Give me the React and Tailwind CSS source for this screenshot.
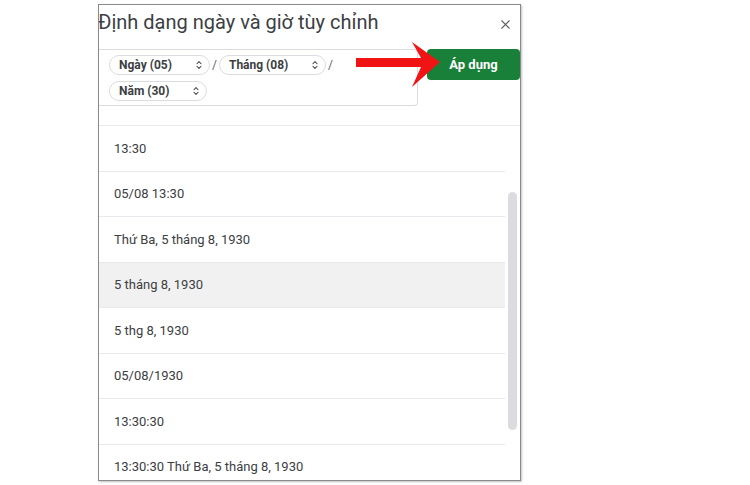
import { X, ChevronsUpDown } from "lucide-react";

const formats = [
  "13:30",
  "05/08 13:30",
  "Thứ Ba, 5 tháng 8, 1930",
  "5 tháng 8, 1930",
  "5 thg 8, 1930",
  "05/08/1930",
  "13:30:30",
  "13:30:30 Thứ Ba, 5 tháng 8, 1930",
];

const Chip = ({ label, width }) => (
  <div className={`${width} h-[20px] rounded-full border border-[#dadce0] flex items-center justify-between pl-[9px] pr-[5px]`}>
    <span className="text-[12px] font-bold text-[#3c4043] leading-none">{label}</span>
    <ChevronsUpDown size={10} strokeWidth={2.5} className="text-[#3c4043]" />
  </div>
);

const Slash = () => <span className="text-[12px] text-[#5f6368] px-[2px] leading-none">/</span>;

export default function App() {
  return (
    <div className="w-[750px] h-[485px] bg-white relative overflow-hidden" style={{ fontFamily: "Roboto, 'Liberation Sans', sans-serif" }}>
      <div className="ml-[98px] mt-[4px] w-[423px] h-[477px] border border-[#8a8a8a] shadow-[1px_1px_2px_rgba(0,0,0,0.25)] flex flex-col overflow-hidden bg-white">

        {/* Title */}
        <div className="h-[44px] flex items-start justify-between shrink-0">
          <h1 className="mt-[3px] text-[20px] leading-[28px] text-[#3c4043] -ml-[1px]">Định dạng ngày và giờ tùy chỉnh</h1>
          <X size={15} strokeWidth={1.8} className="mt-[12px] mr-[7px] text-[#5f6368]" />
        </div>

        {/* Format builder + apply */}
        <div className="flex items-start shrink-0 pb-[19px] border-b border-[#e8eaed]">
          <div className="w-[319px] h-[57px] border border-l-0 border-[#dadce0] rounded-r-[4px] pl-[10px] pt-[5px] flex flex-col gap-[6px]">
            <div className="flex items-center">
              <Chip label="Ngày (05)" width="w-[101px]" />
              <Slash />
              <Chip label="Tháng (08)" width="w-[107px]" />
              <Slash />
            </div>
            <div className="flex items-center">
              <Chip label="Năm (30)" width="w-[98px]" />
            </div>
          </div>
          <button className="ml-[9px] w-[93px] h-[31px] rounded-[4px] bg-[#188038] text-white text-[13px] font-bold flex items-center justify-center">
            Áp dụng
          </button>
        </div>

        {/* Format list */}
        <div className="flex flex-1 min-h-0">
          <ul className="w-[406px] shrink-0">
            {formats.map((f, i) => (
              <li
                key={f}
                className={`h-[45.5px] flex items-center pl-[15px] border-b border-[#e8eaed] text-[13px] text-[#3c4043] ${i === 3 ? "bg-[#f1f1f1]" : ""}`}
              >
                {f}
              </li>
            ))}
          </ul>
          <div className="flex-1 pl-[3px] pt-[66px]">
            <div className="w-[9px] h-[238px] rounded-full bg-[#dadce0]" />
          </div>
        </div>
      </div>

      {/* Red annotation arrow */}
      <svg className="absolute left-0 top-0" width="750" height="485" viewBox="0 0 750 485">
        <polygon points="356,58 421,58 412,42 440,62 412,87 421,67 356,67" fill="#f01414" />
      </svg>
    </div>
  );
}
